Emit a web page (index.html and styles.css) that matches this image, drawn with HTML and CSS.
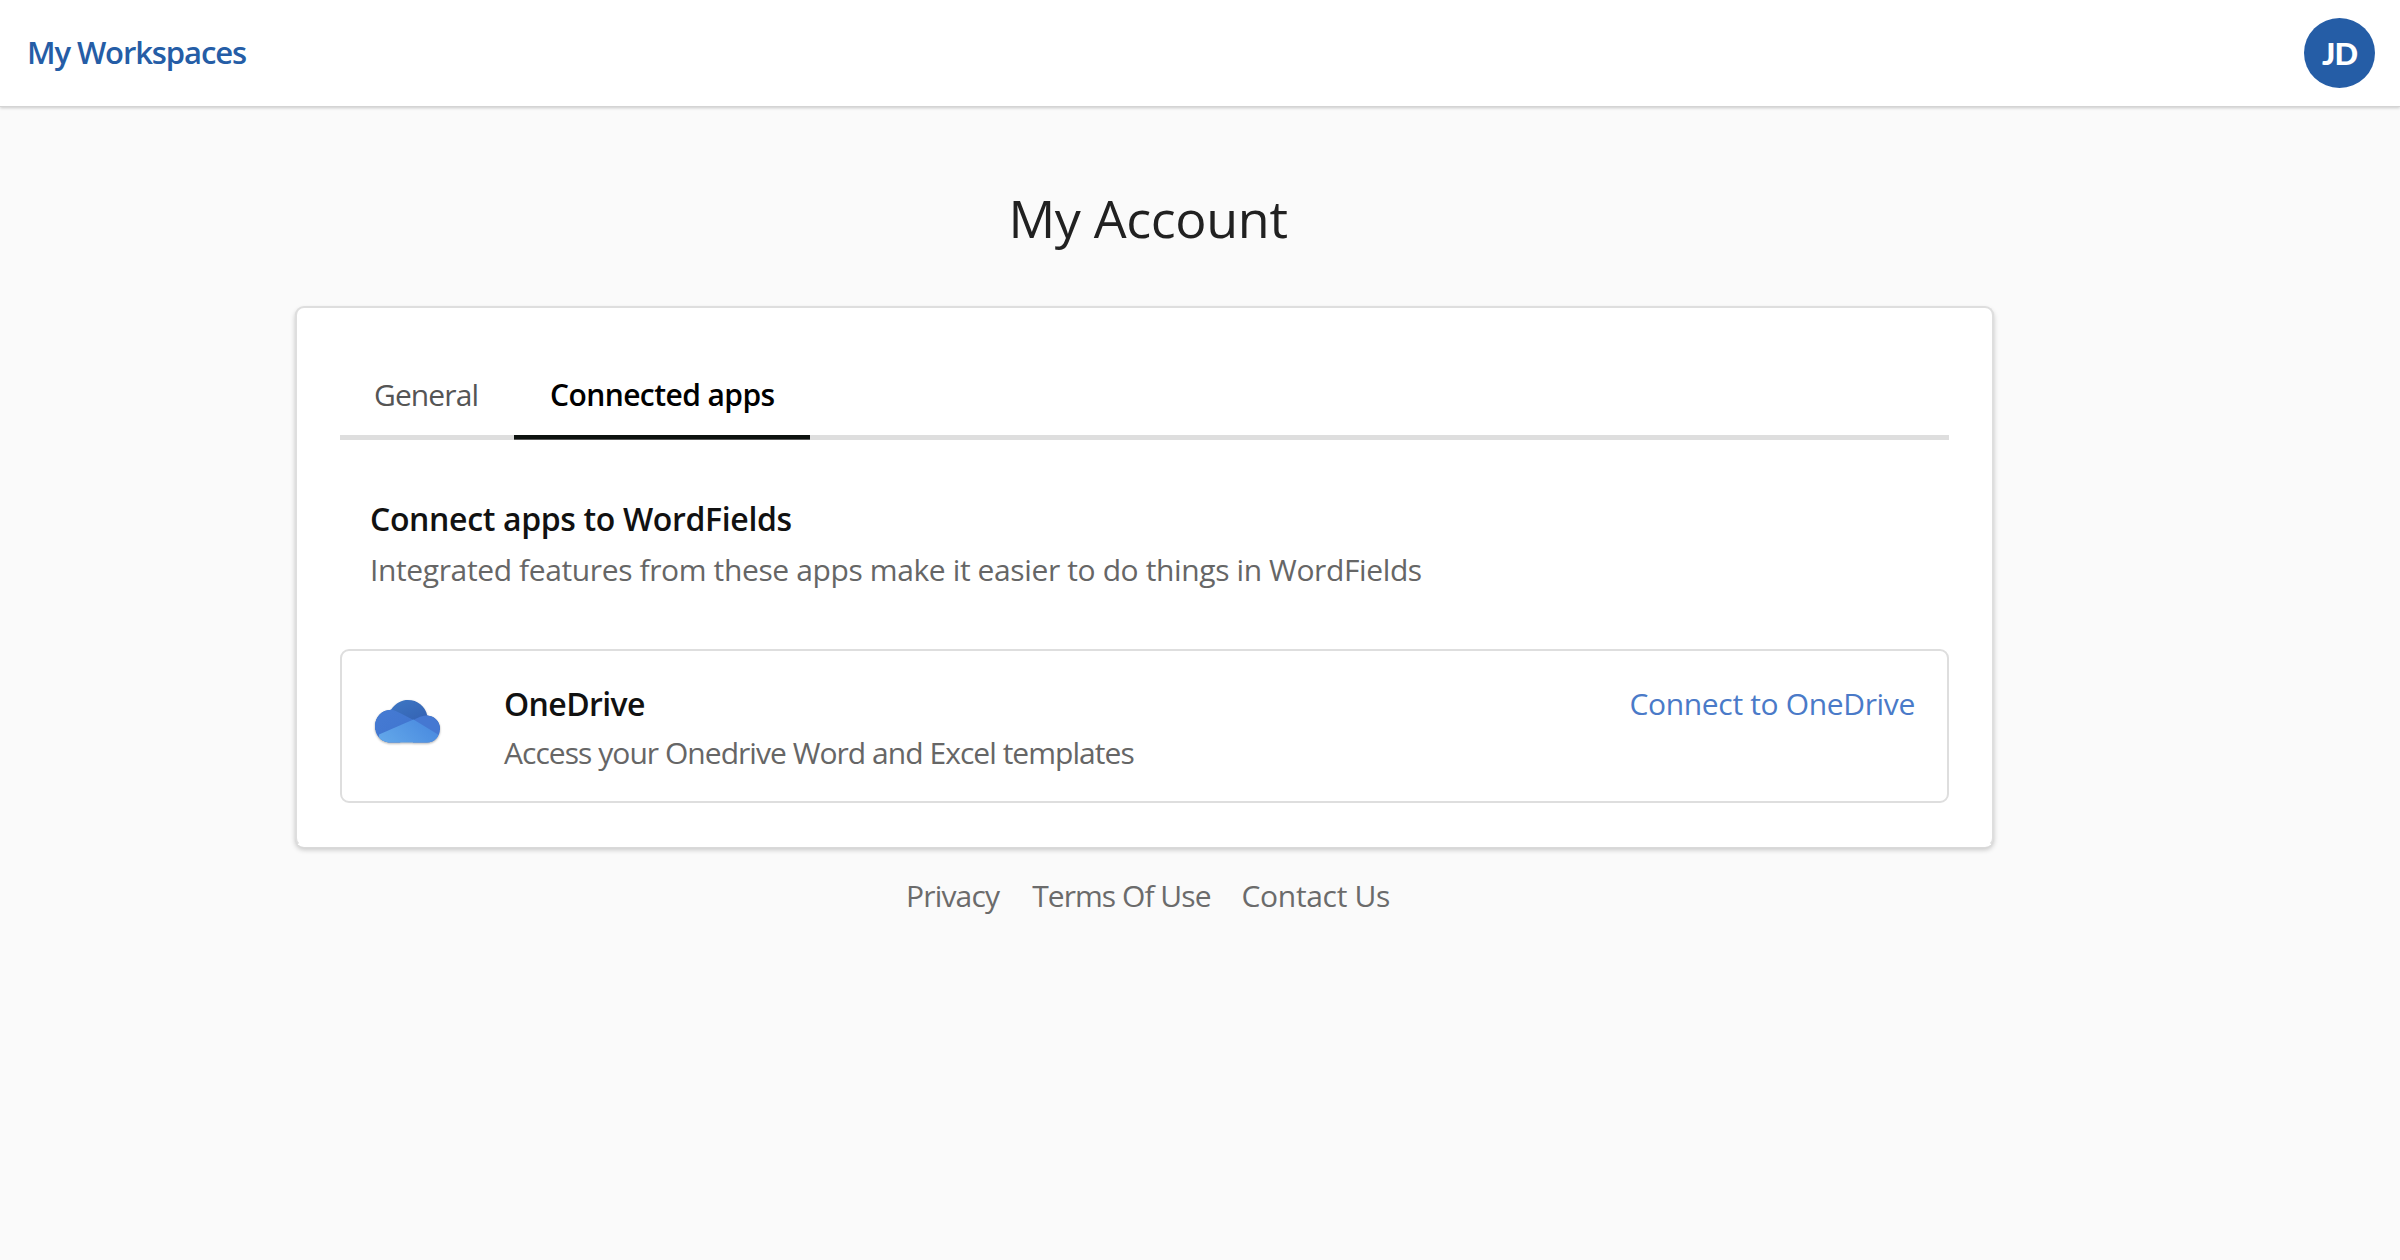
FILE: index.html
```html
<!DOCTYPE html>
<html lang="en">
<head>
<meta charset="utf-8">
<title>My Account</title>
<link rel="stylesheet" href="styles.css">
</head>
<body>
<header class="topbar">
  <a class="workspaces">My Workspaces</a>
  <div class="avatar">JD</div>
</header>
<main class="page">
  <h1 class="title">My Account</h1>
  <section class="card">
    <nav class="tabs">
      <a class="tab tab-general">General</a>
      <a class="tab tab-active">Connected apps</a>
    </nav>
    <div class="intro">
      <h2 class="intro-title">Connect apps to WordFields</h2>
      <p class="intro-text">Integrated features from these apps make it easier to do things in WordFields</p>
    </div>
    <div class="app">
      <svg class="app-icon" viewBox="0 0 65 43" width="65" height="43">
        <defs>
          <linearGradient id="back" x1="0" y1="0" x2="1" y2="1"><stop offset="0" stop-color="#3f7bc8"/><stop offset="1" stop-color="#3059ab"/></linearGradient>
          <linearGradient id="left" x1="0" y1="0" x2="1" y2="1"><stop offset="0" stop-color="#467bd3"/><stop offset="1" stop-color="#3f74cf"/></linearGradient>
          <linearGradient id="front" x1="0" y1="1" x2="1" y2="0.6"><stop offset="0" stop-color="#64a9ea"/><stop offset="1" stop-color="#4b8ce0"/></linearGradient>
          <clipPath id="cloud"><path d="M13.500 42.500C5.500 41.500 0 35 0 26.500C0 17 7 10 16 9.800C21 2.500 27 0 33 0C42.500 0 50 6 52.300 15.500C59.500 16 65 21.500 65 29C65 36.500 59.500 42.500 52 42.500Z"/></clipPath>
        </defs>
        <g clip-path="url(#cloud)">
          <path fill="url(#back)" d="M0 0H65V30H0Z"/>
          <path fill="url(#left)" d="M0 7C10 8 18 9 25 13L38.500 20L25 43H0Z"/>
          <path fill="#4578d2" d="M38.500 20C43 17.500 47 15.500 53 15.300L65 15V43H38Z"/>
          <path fill="url(#front)" d="M4 34.500L38.500 19.500L63 34.500V43H4Z"/>
        </g>
      </svg>
      <div class="app-info">
        <h3 class="app-name">OneDrive</h3>
        <p class="app-text">Access your Onedrive Word and Excel templates</p>
      </div>
      <a class="app-link">Connect to OneDrive</a>
    </div>
  </section>
  <footer class="footer">
    <a class="privacy">Privacy</a>
    <a class="terms">Terms Of Use</a>
    <a class="contact">Contact Us</a>
  </footer>
</main>
</body>
</html>
```
FILE: styles.css
```css
* { box-sizing: border-box; }
body {
  margin: 0;
  min-height: 1260px;
  background: #fafafa;
  color: #212121;
  font: 30px/40px "Open Sans", "Noto Sans", sans-serif;
  white-space: nowrap;
}
h1, h2, h3, p { margin: 0; }

.topbar {
  height: 106px;
  padding: 0 25px 0 27px;
  display: flex;
  align-items: center;
  justify-content: space-between;
  background: #fff;
  box-shadow: 0 1px 0 #d4d4d4, 0 2px 3px rgba(0, 0, 0, .2);
}
.workspaces {
  padding-bottom: 2px;
  color: #255da6;
  font-size: 31px;
  font-weight: 600;
  letter-spacing: -1.1px;
}
.avatar {
  width: 71px;
  height: 70px;
  border-radius: 50%;
  background: #255da6;
  color: #fff;
  font: 900 31px/71px Lato, sans-serif;
  letter-spacing: -1px;
  text-align: center;
}

.page { width: 1699px; margin-left: 295px; padding-top: 82px; }
.title {
  padding-left: 7px;
  font-size: 52px;
  font-weight: 400;
  line-height: 60px;
  letter-spacing: -.34px;
  text-align: center;
}
.card {
  height: 541px;
  margin-top: 58px;
  padding: 66px 43px 42px 43px;
  background: #fff;
  border: 2px solid #dedede;
  border-bottom-color: #fff;
  border-radius: 9px;
  box-shadow: 0 1px 1px #dadada, 0 3px 5px rgba(0, 0, 0, .2);
}

.tabs {
  display: flex;
  height: 66px;
  border-bottom: 5px solid #dedede;
}
.tab { height: 66px; padding-top: 1px; color: #555; }
.tab-general { width: 174px; padding-left: 34px; letter-spacing: -.9px; }
.tab-active {
  width: 296px;
  padding-left: 36px;
  color: #000;
  font-weight: 600;
  letter-spacing: -.57px;
  border-bottom: 4px solid #0d120f;
  box-shadow: 0 1px 0 #5a5a5a;
  height: 65px;
}

.intro { padding: 57px 0 0 30px; }
.intro-title {
  color: #111;
  font-size: 32px;
  font-weight: 600;
  line-height: 44px;
  letter-spacing: -.35px;
}
.intro-text { margin-top: 9px; color: #666; letter-spacing: -.38px; }

.app {
  display: flex;
  height: 154px;
  margin-top: 59px;
  padding: 31px 32px 0 33px;
  border: 2px solid #dedede;
  border-radius: 9px;
}
.app-icon { margin-top: 18px; filter: drop-shadow(0 1px 1px rgba(0, 0, 0, .3)); }
.app-info { flex: 1; padding-left: 64px; }
.app-name {
  color: #111;
  font-size: 32px;
  font-weight: 600;
  line-height: 44px;
  letter-spacing: -.6px;
}
.app-text { margin-top: 7px; color: #666; letter-spacing: -.96px; }
.app-link { margin-top: 2px; color: #4a7ac8; letter-spacing: -.34px; }

.footer { display: flex; padding: 29px 0 0 611px; color: #6b6b6b; }
.privacy { letter-spacing: -.82px; }
.terms { margin-left: 33px; letter-spacing: -.95px; }
.contact { margin-left: 31px; letter-spacing: -.33px; }
```
